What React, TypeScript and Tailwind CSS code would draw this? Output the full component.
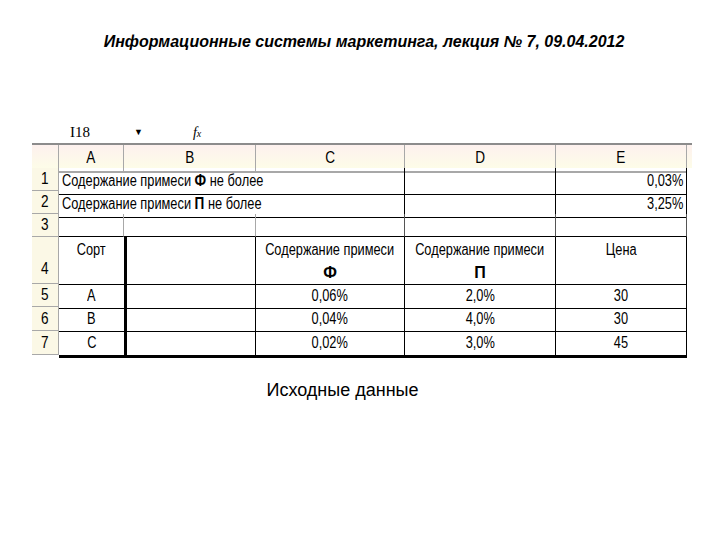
import { ReactNode } from 'react'

const cols = 'grid grid-cols-[27px_65px_132px_149px_151px_131px]'

// narrow spreadsheet font: Arial squeezed horizontally
const N = ({
  children,
  o = 'origin-center',
}: {
  children: ReactNode
  o?: string
}) => <span className={`inline-block whitespace-nowrap scale-x-[0.8] ${o}`}>{children}</span>

const RowNum = ({ n, bottom, h }: { n: string; bottom?: boolean; h: string }) => (
  <div
    className={`${h} flex ${bottom ? 'items-end pb-0.5' : 'items-center'} justify-center border-r border-b border-[#a8a8a8] bg-[#fbf8e6] text-[17px] text-black`}
  >
    <N>{n}</N>
  </div>
)

const Cell = ({
  children,
  className = '',
}: {
  children?: ReactNode
  className?: string
}) => <div className={`flex items-center text-[16px] ${className}`}>{children}</div>

const App = () => {
  return (
    <div className="flex h-[540px] w-[720px] flex-col bg-white font-['Liberation_Sans',Arial,sans-serif]">
      <h1 className="mt-[30px] pl-[8px] text-center text-[16px] font-bold italic text-black">
        Информационные системы маркетинга, лекция № 7, 09.04.2012
      </h1>

      <div className="mt-[67px] flex h-[22px] items-center pl-[70px] text-black">
        <span className="font-['Liberation_Serif',serif] text-[15px]">I18</span>
        <span className="ml-[44px] text-[9px] leading-none">▼</span>
        <span className="ml-[50px] font-['Liberation_Serif',serif] text-[14px] italic">
          f<span className="text-[10px]">x</span>
        </span>
      </div>

      <div className="ml-[32px] w-[660px] text-black">
        {/* column header row */}
        <div className="border-t-2 border-[#8c8c8c]">
          <div className={`${cols} h-[23px] bg-gradient-to-b from-[#fdf1ee] to-[#fdfce8] text-[17px]`}>
            <div className="border-r border-b-2 border-[#a8a8a8]" />
            {['A', 'B', 'C', 'D', 'E'].map((c) => (
              <div
                key={c}
                className="flex items-center justify-center border-r border-b-2 border-[#a8a8a8]"
              >
                <N>{c}</N>
              </div>
            ))}
          </div>
        </div>

        {/* rows 1-2 */}
        {[
          ['1', 'Ф', '0,03%'],
          ['2', 'П', '3,25%'],
        ].map(([n, l, v]) => (
          <div key={n} className={`${cols} h-[23px]`}>
            <RowNum n={n} h="h-[23px]" />
            <Cell className="col-span-3 border-r border-b border-black pl-[3px]">
              <N o="origin-left">
                Содержание примеси <b className="text-[17px]">{l}</b> не более
              </N>
            </Cell>
            <Cell className="border-r border-b border-black" />
            <Cell className="justify-end border-r border-b border-black pr-[3px]">
              <N o="origin-right">{v}</N>
            </Cell>
          </div>
        ))}

        {/* row 3 */}
        <div className={`${cols} h-[23px]`}>
          <RowNum n="3" h="h-[23px]" />
          <Cell className="border-r border-b border-[#a8a8a8] border-b-black" />
          <Cell className="border-r border-b border-[#a8a8a8] border-b-black" />
          <Cell className="border-r border-b border-[#555] border-b-black" />
          <Cell className="border-r border-b border-[#555] border-b-black" />
          <Cell className="border-r border-b border-[#555] border-b-black" />
        </div>

        {/* row 4 */}
        <div className={`${cols} h-[47px]`}>
          <RowNum n="4" bottom h="h-[47px]" />
          <div className="flex justify-center border-b border-black pt-[1px] text-[16px]">
            <N>Сорт</N>
          </div>
          <div className="border-r border-b border-l-[3px] border-black" />
          <div className="flex flex-col items-center border-r border-b border-black pt-[1px] text-[16px] leading-[23px]">
            <N>Содержание примеси</N>
            <b className="text-[16px]">Ф</b>
          </div>
          <div className="flex flex-col items-center border-r border-b border-black pt-[1px] text-[16px] leading-[23px]">
            <N>Содержание примеси</N>
            <b className="text-[16px]">П</b>
          </div>
          <div className="flex justify-center border-r border-b border-black pt-[1px] text-[16px]">
            <N>Цена</N>
          </div>
        </div>

        {/* rows 5-7 */}
        {[
          ['5', 'А', '0,06%', '2,0%', '30', 'h-[23px]'],
          ['6', 'В', '0,04%', '4,0%', '30', 'h-[24px]'],
          ['7', 'С', '0,02%', '3,0%', '45', 'h-[24px]'],
        ].map(([n, s, f, p, c, h], i) => {
          const b = i === 2 ? 'border-b-[3px]' : 'border-b'
          return (
            <div key={n} className={`${cols} ${h}`}>
              <RowNum n={n} h={h} />
              <Cell className={`justify-center ${b} border-black`}>
                <N>{s}</N>
              </Cell>
              <Cell className={`border-r border-l-[3px] ${b} border-black`} />
              <Cell className={`justify-center border-r ${b} border-black`}>
                <N>{f}</N>
              </Cell>
              <Cell className={`justify-center border-r ${b} border-black`}>
                <N>{p}</N>
              </Cell>
              <Cell className={`justify-center border-r ${b} border-black`}>
                <N>{c}</N>
              </Cell>
            </div>
          )
        })}
      </div>

      <p className="mt-[22px] pr-[35px] text-center text-[18px] text-black">Исходные данные</p>
    </div>
  )
}

export default App
